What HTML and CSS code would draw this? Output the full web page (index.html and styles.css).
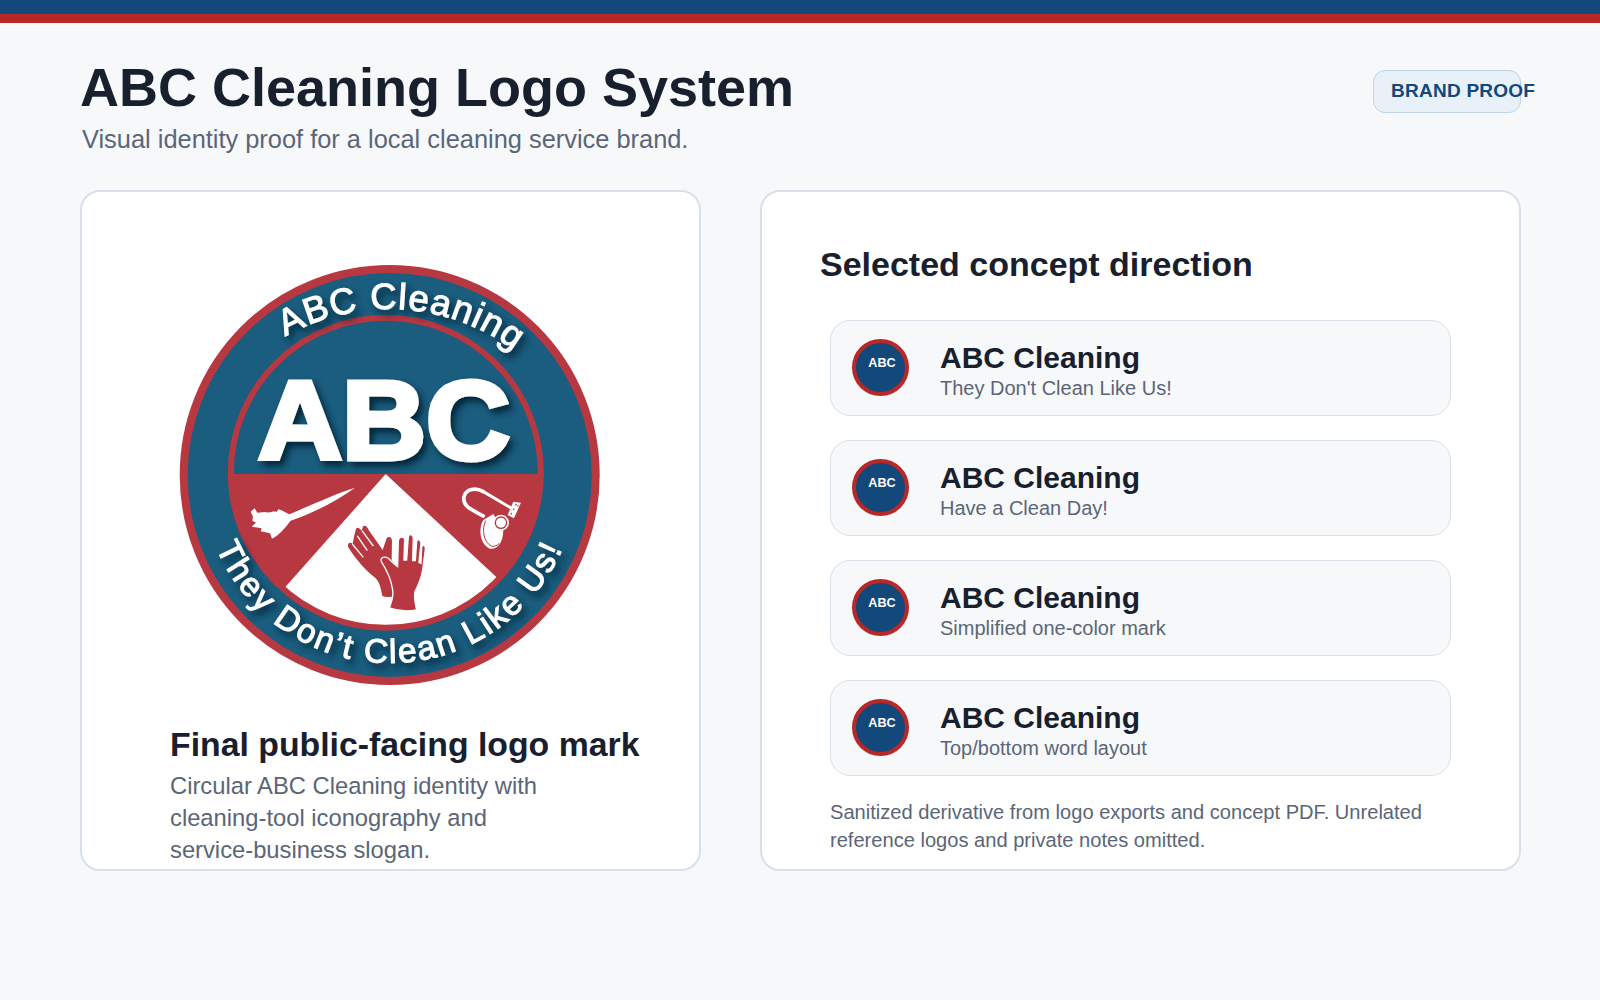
FILE: index.html
```html
<!DOCTYPE html>
<html lang="en">
<head>
<meta charset="utf-8">
<title>ABC Cleaning Logo System</title>
<link rel="stylesheet" href="styles.css">
</head>
<body>
<div class="topbar"></div>
<header class="header">
  <div class="heading">
    <h1>ABC Cleaning Logo System</h1>
    <p>Visual identity proof for a local cleaning service brand.</p>
  </div>
  <div class="badge">BRAND PROOF</div>
</header>
<main class="layout">
  <section class="card card-logo">
    <svg class="logo" viewBox="0 0 450 450" width="450" height="450" aria-label="ABC Cleaning logo">
      <defs>
        <clipPath id="inner"><circle cx="225.8" cy="222.8" r="153"/></clipPath>
        <filter id="shadow" x="-20%" y="-20%" width="150%" height="150%">
          <feDropShadow dx="4" dy="5" stdDeviation="3.5" flood-color="#062338" flood-opacity=".95"/>
        </filter>
        <path id="arcTop" d="M 19 269 A 210 210 0 0 1 439 269"/>
        <path id="arcBottom" d="M 41.500 225 A 188 188 0 0 0 417.500 225"/>
      </defs>
      <circle cx="229.7" cy="225" r="206" fill="#1a5d7e" stroke="#b83842" stroke-width="8"/>
      <g clip-path="url(#inner)">
        <rect x="60" y="60" width="340" height="164" fill="#1a5d7e"/>
        <rect x="60" y="224" width="340" height="170" fill="#b83842"/>
        <polygon points="225.7,224 25,450 449,432" fill="#fff"/>
      </g>
      <circle cx="225.8" cy="222.8" r="155" fill="none" stroke="#b83842" stroke-width="6"/>
      <text class="logo-abc" x="224" y="209" text-anchor="middle" textLength="252" lengthAdjust="spacingAndGlyphs" filter="url(#shadow)">ABC</text>
      <g filter="url(#shadow)">
        <text class="logo-top"><textPath href="#arcTop" startOffset="52%" text-anchor="middle">ABC Cleaning</textPath></text>
        <text class="logo-bottom"><textPath href="#arcBottom" startOffset="50%" text-anchor="middle">They Don’t Clean Like Us!</textPath></text>
      </g>
      <g transform="translate(60 220) scale(.3333)">
        <path fill="#fff" d="M405 53 C350 70 280 102 208 133 C195 128 185 120 175 118 L170 126 C160 122 148 130 135 126 L112 128 L104 115 L92 125 L99 140 L97 152 L108 158 L95 170 L125 175 L122 184 L150 190 L156 206 C178 196 196 172 212 152 C280 130 350 92 405 53 Z"/>
        <g fill="none" stroke="#fff" stroke-linecap="round">
          <path stroke-width="11" d="M790 65 C768 52 738 56 732 80 C727 106 748 116 790 138"/>
          <path stroke-width="9" d="M790 65 L875 115"/>
        </g>
        <path fill="#fff" d="M880 95 L903 98 L882 145 L863 135 Z"/>
        <g fill="#b83842"><circle cx="888" cy="104" r="2.500"/><circle cx="881" cy="118" r="2.500"/><circle cx="874" cy="131" r="2.500"/><circle cx="894" cy="108" r="2.500"/></g>
        <path fill="#fff" d="M820 132 L790 150 C775 175 778 222 810 236 C830 240 850 220 850 180 Z"/>
        <path fill="none" stroke="#b83842" stroke-width="3" d="M797 152 C785 178 790 216 815 229 C825 230 832 226 838 220"/>
        <circle cx="843" cy="158" r="24" fill="#fff"/>
        <circle cx="843" cy="158" r="19" fill="#b83842"/>
        <circle cx="843" cy="158" r="15" fill="#fff"/>
        <path fill="#b83842" d="M487 378 C482 350 478 332 462 320 C438 303 405 265 385 232 C380 220 392 214 398 222 L402 200 L408 176 C414 170 420 176 424 182 L430 168 C438 166 442 172 446 180 L488 240 L500 205 C508 197 517 203 516 215 L515 270 L540 300 L516 380 C505 382 495 382 487 378 Z"/>
        <g stroke="#fff" stroke-width="4" fill="none">
          <path d="M397 222 L430 262"/>
          <path d="M412 198 L442 242"/>
          <path d="M426 182 L460 228"/>
        </g>
        <path fill="#b83842" stroke="#fff" stroke-width="4" d="M508 414 C515 395 522 380 518 360 C515 335 500 300 484 275 C480 262 495 258 505 265 C515 275 525 285 533 290 L535 215 C535 200 552 195 554 210 L552 270 L560 270 L565 200 C567 190 580 192 580 205 L578 272 L586 272 L590 215 C592 205 603 208 603 220 L597 278 L603 280 L605 232 C607 222 618 225 616 238 L608 300 C604 325 595 345 585 365 C582 380 585 400 590 420 C560 425 530 422 508 414 Z"/>
      </g>
    </svg>
    <div class="caption">
      <h2>Final public-facing logo mark</h2>
      <p>Circular ABC Cleaning identity with<br>cleaning-tool iconography and<br>service-business slogan.</p>
    </div>
  </section>
  <section class="card card-list">
    <h2 class="list-title">Selected concept direction</h2>
    <ul class="rows">
      <li class="row"><span class="mark">ABC</span><div class="row-text"><strong>ABC Cleaning</strong><span>They Don't Clean Like Us!</span></div></li>
      <li class="row"><span class="mark">ABC</span><div class="row-text"><strong>ABC Cleaning</strong><span>Have a Clean Day!</span></div></li>
      <li class="row"><span class="mark">ABC</span><div class="row-text"><strong>ABC Cleaning</strong><span>Simplified one-color mark</span></div></li>
      <li class="row"><span class="mark">ABC</span><div class="row-text"><strong>ABC Cleaning</strong><span>Top/bottom word layout</span></div></li>
    </ul>
    <p class="note">Sanitized derivative from logo exports and concept PDF. Unrelated<br>reference logos and private notes omitted.</p>
  </section>
</main>
</body>
</html>
```
FILE: styles.css
```css
* { box-sizing: border-box; }
html, body { margin: 0; padding: 0; }
body {
  background: #f7f8fa;
  color: #18202e;
  font-family: "Liberation Sans", Arial, sans-serif;
  height: 1000px;
  overflow: hidden;
}
.topbar {
  height: 23px;
  background: #12487a;
  border-bottom: 9px solid #b92828;
}
.header {
  display: flex;
  justify-content: space-between;
  align-items: flex-start;
  padding: 37px 79px 0 80px;
  height: 167px;
}
.heading h1 {
  margin: 0;
  font-size: 54px;
  line-height: 55px;
  font-weight: 700;
}
.heading p {
  margin: 9px 0 0 2px;
  font-size: 25.4px;
  line-height: 30px;
  color: #5a6678;
}
.badge {
  width: 148px;
  height: 43px;
  margin-top: 10px;
  padding: 0 17px 2px;
  display: flex;
  align-items: center;
  white-space: nowrap;
  font-size: 19px;
  font-weight: 700;
  letter-spacing: .25px;
  color: #12487a;
  background: #e8f0f8;
  border: 1px solid #bcd4e6;
  border-radius: 12px;
}
.layout {
  display: grid;
  grid-template-columns: 621px 761px;
  gap: 59px;
  padding: 0 79px 0 80px;
}
.card {
  height: 681px;
  background: #fff;
  border: 2px solid #d8e1ea;
  border-radius: 20px;
  overflow: hidden;
}
.card-logo { padding: 58px 0 0 78px; }
.logo { display: block; }
.caption { margin: 24px 0 0 10px; }
.caption h2 {
  margin: 0;
  font-size: 33.8px;
  line-height: 40px;
  font-weight: 700;
}
.caption p {
  margin: 6px 0 0;
  font-size: 23.75px;
  line-height: 32px;
  color: #5a6678;
}
.card-list { padding: 52px 68px 0 58px; }
.list-title {
  margin: 0;
  font-size: 34px;
  line-height: 40px;
  font-weight: 700;
}
.rows {
  list-style: none;
  margin: 36px 0 0 10px;
  padding: 0;
  display: flex;
  flex-direction: column;
  gap: 24px;
}
.row {
  height: 96px;
  display: flex;
  align-items: center;
  gap: 31px;
  padding-left: 21px;
  background: #f7f8fa;
  border: 1px solid #d8e1ea;
  border-radius: 20px;
}
.mark {
  flex: none;
  width: 57px;
  height: 57px;
  margin-bottom: 2px;
  padding: 0 0 8px 3px;
  display: flex;
  align-items: center;
  justify-content: center;
  font-size: 12.6px;
  font-weight: 700;
  color: #fff;
  background: #12487a;
  border: 4px solid #b92828;
  border-radius: 50%;
}
.row-text {
  display: flex;
  flex-direction: column;
  padding-top: 4px;
}
.row-text strong {
  font-size: 30px;
  line-height: 36px;
}
.row-text span {
  font-size: 20px;
  line-height: 24px;
  color: #5a6678;
}
.note {
  margin: 22px 0 0 10px;
  font-size: 20.1px;
  line-height: 28px;
  color: #5a6678;
}
.logo-abc {
  font-family: "Liberation Sans", Arial, sans-serif;
  font-size: 112px;
  font-weight: 700;
  fill: #fff;
  stroke: #fff;
  stroke-width: 5px;
}
.logo-top, .logo-bottom {
  font-family: "Liberation Sans", Arial, sans-serif;
  fill: #fff;
  stroke: #fff;
  stroke-width: 1px;
}
.logo-top { font-size: 36.5px; letter-spacing: 1.2px; }
.logo-bottom { font-size: 33.5px; letter-spacing: 2.1px; }
```
